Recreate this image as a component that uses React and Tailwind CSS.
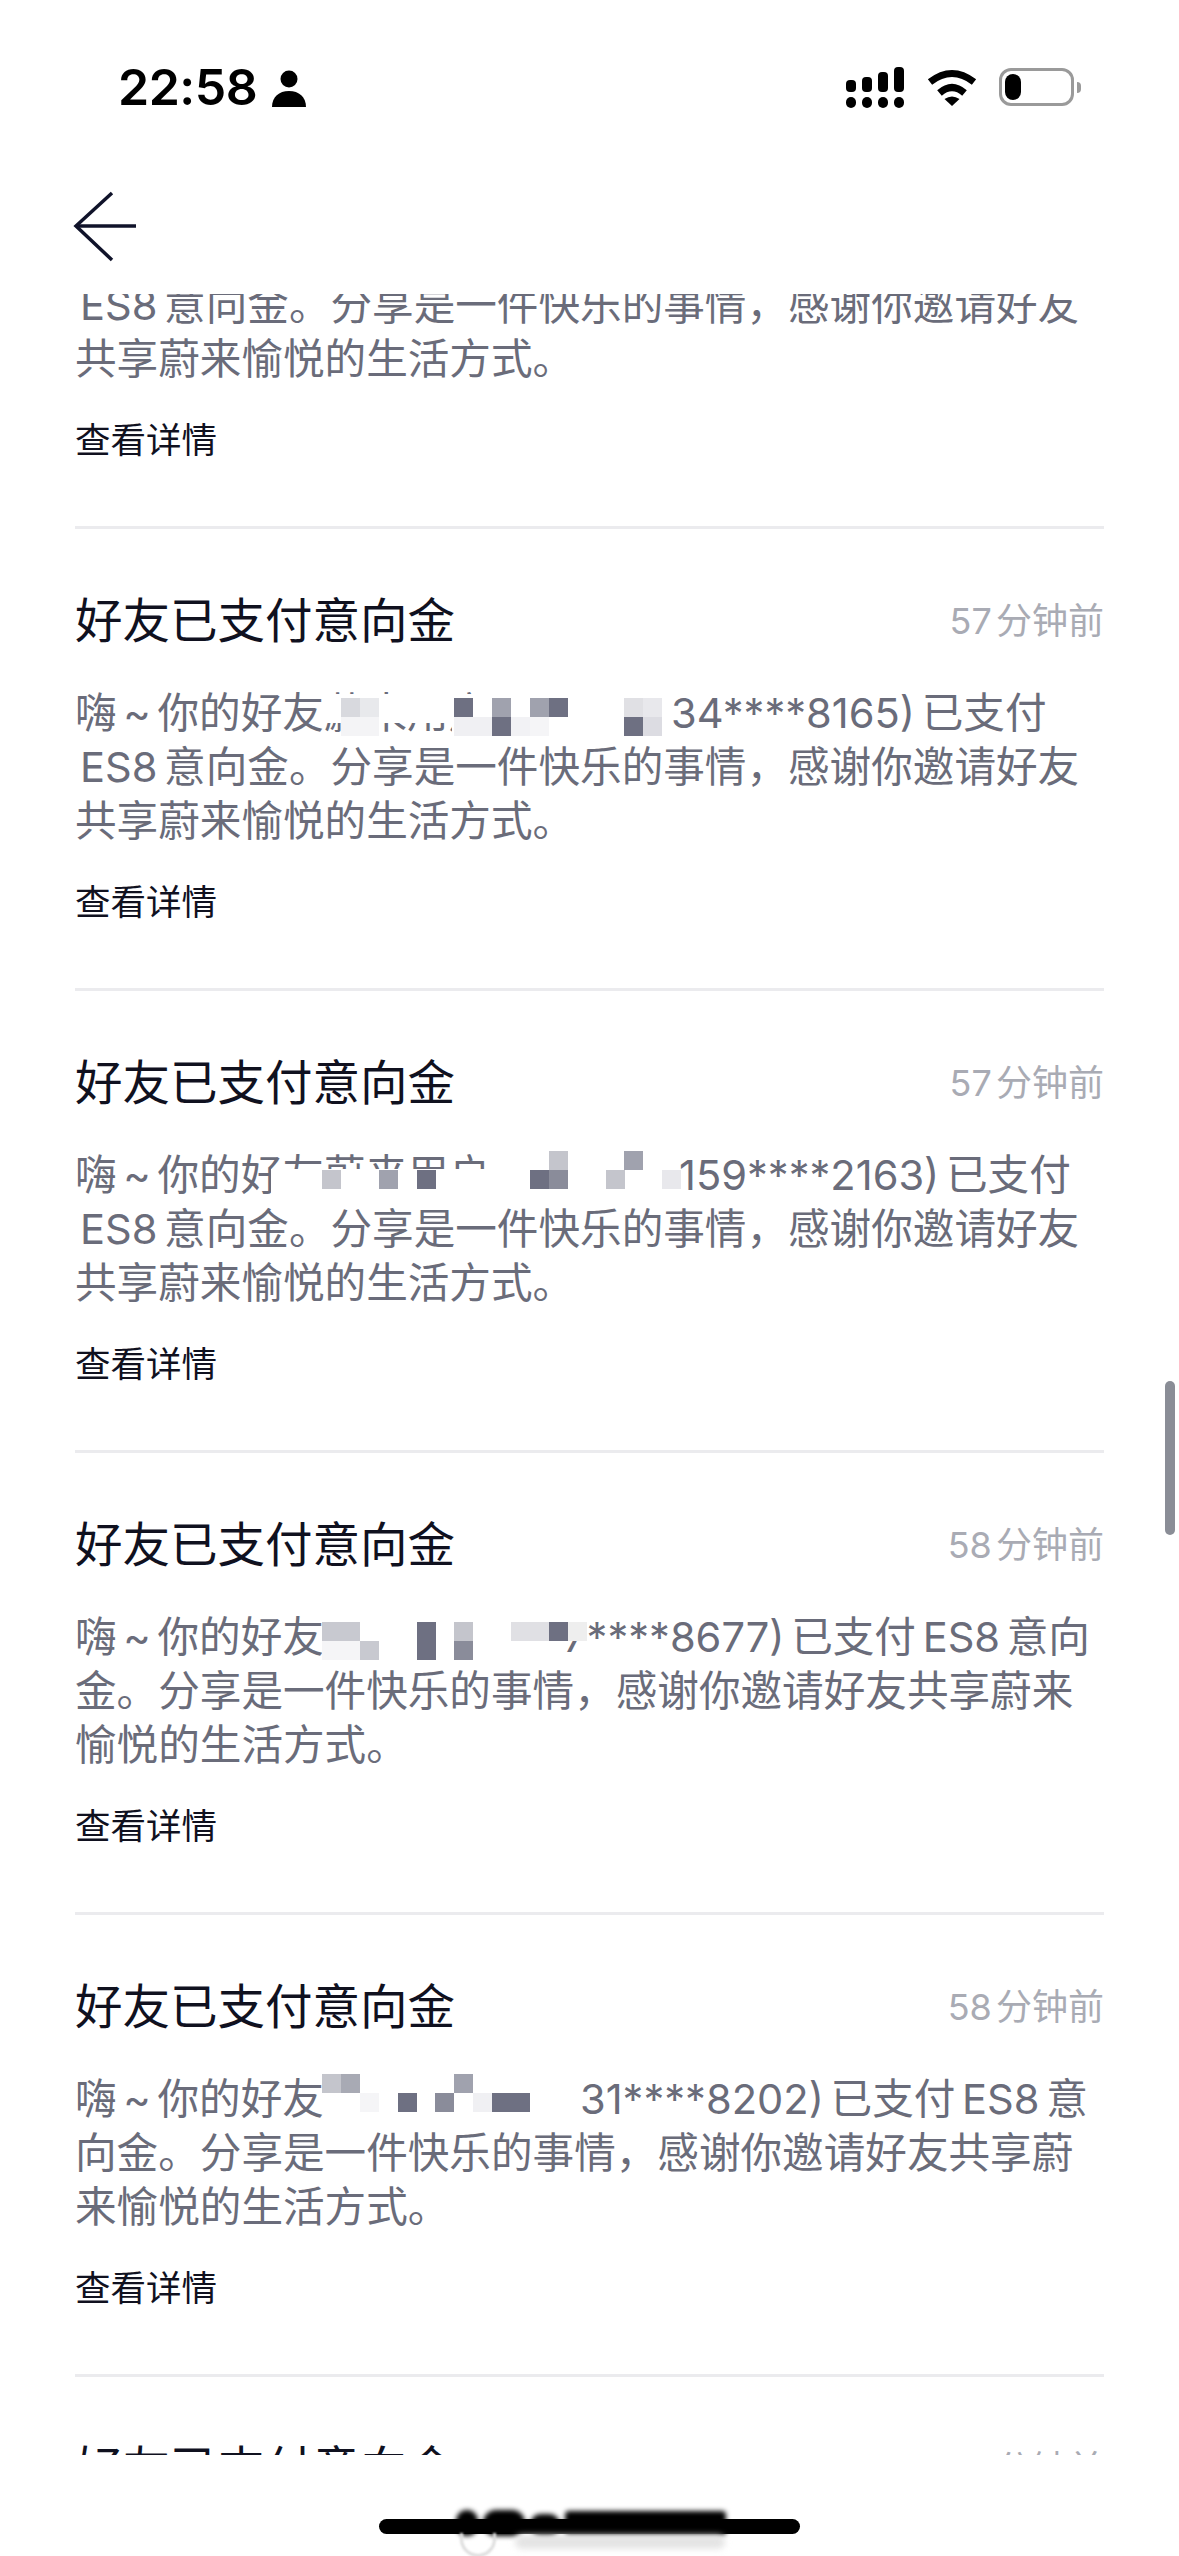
const D = '#6e7082'
const L2 = 'ES8 意向金。分享是一件快乐的事情\uFF0C感谢你邀请好友'
const L3 = '共享蔚来愉悦的生活方式。'

const CARDS = [
  {
    time: '57 分钟前',
    lines: ['嗨 ~ 你的好友已支付', L2, L3],
  },
  {
    time: '57 分钟前',
    prefix: '嗨 ~ 你的好友蔚来用户',
    tail: '34****8165) 已支付',
    tailX: 596,
    rowTop: 12,
    masks: [[247, 8, 349, 29], [377, 37, 219, 17]],
    cells: [
      [1, 0, '#d8d9de'], [2, 0, '#e8e9ec'], [7, 0, D], [9, 0, '#a0a2ae'], [11, 0, '#a0a2ae'], [12, 0, D], [16, 0, '#e0e0e4'], [17, 0, '#e8e8ec'],
      [1, 1, '#f4f4f6', 2], [7, 1, '#f0f0f3', 2], [9, 1, D], [10, 1, '#f2f2f5'], [11, 1, '#f5f5f7'], [16, 1, D], [17, 1, '#dcdce2'],
    ],
    lines: [null, L2, L3],
  },
  {
    time: '57 分钟前',
    prefix: '嗨 ~ 你的好友蔚来用户',
    tail: '159****2163) 已支付',
    tailX: 604,
    rowTop: 3,
    masks: [[196, 21, 408, 33], [417, 0, 187, 21]],
    cells: [
      [12, 0, '#c4c5cc'], [16, 0, '#a0a2ae'],
      [0, 1, '#c4c5cc'], [3, 1, '#a0a2ae'], [5, 1, D], [11, 1, D], [12, 1, '#8a8c9a'], [15, 1, '#c4c5cc'], [18, 1, '#e8e8ec'],
    ],
    lines: [null, L2, L3],
  },
  {
    time: '58 分钟前',
    prefix: '嗨 ~ 你的好友',
    tail: '7****8677) 已支付 ES8 意向',
    tailX: 488,
    rowTop: 12,
    masks: [],
    cells: [
      [0, 0, '#c8c9d0', 2], [5, 0, D], [7, 0, '#c4c5cc'], [10, 0, '#e0e0e4', 2], [12, 0, D], [13, 0, '#eeeeee'],
      [0, 1, '#f5f5f7', 2], [2, 1, '#c8c9d0'], [5, 1, D], [7, 1, '#8a8c9a'],
    ],
    lines: [null, '金。分享是一件快乐的事情\uFF0C感谢你邀请好友共享蔚来', '愉悦的生活方式。'],
  },
  {
    time: '58 分钟前',
    prefix: '嗨 ~ 你的好友',
    tail: '31****8202) 已支付 ES8 意',
    tailX: 505,
    rowTop: 2,
    masks: [],
    cells: [
      [0, 0, '#c4c5cc'], [1, 0, '#a8aab4'], [7, 0, '#a0a2ae'],
      [2, 1, '#f5f5f7'], [4, 1, D], [6, 1, '#8a8c9a'], [8, 1, '#f0f0f3'], [9, 1, D, 2],
    ],
    lines: [null, '向金。分享是一件快乐的事情\uFF0C感谢你邀请好友共享蔚', '来愉悦的生活方式。'],
  },
  {
    time: '58 分钟前',
    lines: ['嗨 ~ 你的好友已支付', L2, L3],
  },
]

const StatusIcons = () => (
  <div className="flex items-start">
    <svg width="58" height="41" viewBox="0 0 58 41" fill="#000">
      <rect x="0" y="13" width="10" height="12" rx="4" />
      <rect x="16" y="10" width="10" height="15" rx="4" />
      <rect x="32" y="5" width="10" height="20" rx="4" />
      <rect x="48" y="0" width="10" height="25" rx="4" />
      <rect x="0" y="30" width="10" height="11" rx="5" />
      <rect x="16" y="30" width="10" height="11" rx="5" />
      <rect x="32" y="30" width="10" height="11" rx="5" />
      <rect x="48" y="30" width="10" height="11" rx="5" />
    </svg>
    <svg className="ml-[23px] mt-[2px]" width="50" height="37" viewBox="0 0 50 37">
      <path d="M3 13 Q25 -4 47 13" fill="none" stroke="#000" strokeWidth="7" />
      <path d="M12.5 24 Q25 13 37.5 24" fill="none" stroke="#000" strokeWidth="7" />
      <path d="M17.5 30 Q25 25 32.5 30 L25 37 Z" fill="#000" />
    </svg>
    <div className="ml-[22px] mt-[1px] w-[75px] h-[38px] rounded-[12px] border-[3px] border-[#9a9a9a] p-[3px] flex">
      <div className="w-[16px] h-full rounded-full bg-black" />
    </div>
    <div className="ml-[3px] mt-[15px] w-[4px] h-[11px] rounded-r-full bg-[#9a9a9a]" />
  </div>
)

const Mosaic = ({ card }) => (
  <>
    {card.masks.map((m, i) => (
      <span key={i} className="absolute bg-white" style={{ left: m[0], top: m[1], width: m[2], height: m[3] }} />
    ))}
    {card.cells.map((c, i) => (
      <span
        key={i}
        className="absolute"
        style={{
          left: 247 + c[0] * 18.9,
          top: card.rowTop + c[1] * 18.5,
          width: 19 * (c[3] || 1),
          height: 19,
          backgroundColor: c[2],
        }}
      />
    ))}
  </>
)

const Card = ({ card }) => (
  <div className="pt-[60px] pb-[60px] border-b-[3px] border-[#ebebee]">
    <div className="flex items-center justify-between h-[64px]">
      <h2 className="text-[47.5px] leading-[64px] text-[#10111f]">好友已支付意向金</h2>
      <span className="text-[36px] text-[#a9abb4] [word-spacing:-6px]">{card.time}</span>
    </div>
    <div className="mt-[33px] text-[41.6px] leading-[54px] text-[#6a6c7a] whitespace-nowrap [word-spacing:-5px]">
      {card.lines.map((line, i) =>
        line === null ? (
          <div key={i} className="relative h-[54px] flex">
            <span className="block overflow-hidden" style={{ width: card.tailX }}>{card.prefix}</span>
            <span>{card.tail}</span>
            <Mosaic card={card} />
          </div>
        ) : (
          <div key={i} className={line.startsWith('ES8') ? 'h-[54px] pl-[5px]' : 'h-[54px]'}>{line}</div>
        )
      )}
    </div>
    <div className="mt-[30px] text-[35.5px] leading-[50px] text-[#10111f]">查看详情</div>
  </div>
)

export default function App() {
  return (
    <div className="relative flex flex-col w-[1179px] h-[2556px] overflow-hidden bg-white font-['Inter','Noto_Sans_CJK_SC',sans-serif]">
      <header className="flex justify-between h-[176px] pt-[67px] pl-[118px] pr-[98px]">
        <div className="flex items-start">
          <span className="text-[50px] leading-[40px] font-semibold text-black tracking-[-0.5px]">22:58</span>
          <svg className="ml-[15px] mt-[3px]" width="34" height="37" viewBox="0 0 34 37" fill="#000">
            <circle cx="17" cy="9" r="8.5" />
            <path d="M0 37 C0 27 7 21 17 21 C27 21 34 27 34 37 Z" />
          </svg>
        </div>
        <StatusIcons />
      </header>

      <nav className="h-[118px] pl-[73px] pt-[15px]">
        <svg width="66" height="72" viewBox="0 0 66 72" fill="none" stroke="#10132a" strokeWidth="3.5">
          <path d="M39 2 L3 35 L39 69" />
          <path d="M3 35 H63" />
        </svg>
      </nav>

      <main className="h-[2161px] overflow-hidden px-[75px]">
        <div className="-mt-[227px]">
          {CARDS.map((card, i) => (
            <Card key={i} card={card} />
          ))}
        </div>
      </main>

      <footer className="relative flex-1 flex justify-center pt-[64px]">
        <div className="w-[421px] h-[15px] rounded-full bg-black" />
        <div className="absolute left-[456px] top-[55px] w-[270px] h-[26px] flex gap-[5px] blur-[2.5px]">
          <div className="w-[22px] h-full rounded-full bg-black" />
          <div className="w-[42px] h-full rounded-full bg-black" />
          <div className="w-[30px] h-[22px] mt-[4px] rounded-full bg-black" />
          <div className="flex-1 h-[24px] mt-[1px] rounded-sm bg-black" />
        </div>
        <div className="absolute left-[460px] top-[78px] w-[36px] h-[24px] rounded-b-full border-[3px] border-t-0 border-[#dddddd] blur-[1px]" />
        <div className="absolute left-[515px] top-[80px] w-[210px] h-[14px] rounded-full bg-[#e4e4e4] blur-[3px]" />
      </footer>

      <div className="absolute left-[1165px] top-[1381px] w-[10px] h-[154px] rounded-full bg-[#8a8d96]" />
    </div>
  )
}
